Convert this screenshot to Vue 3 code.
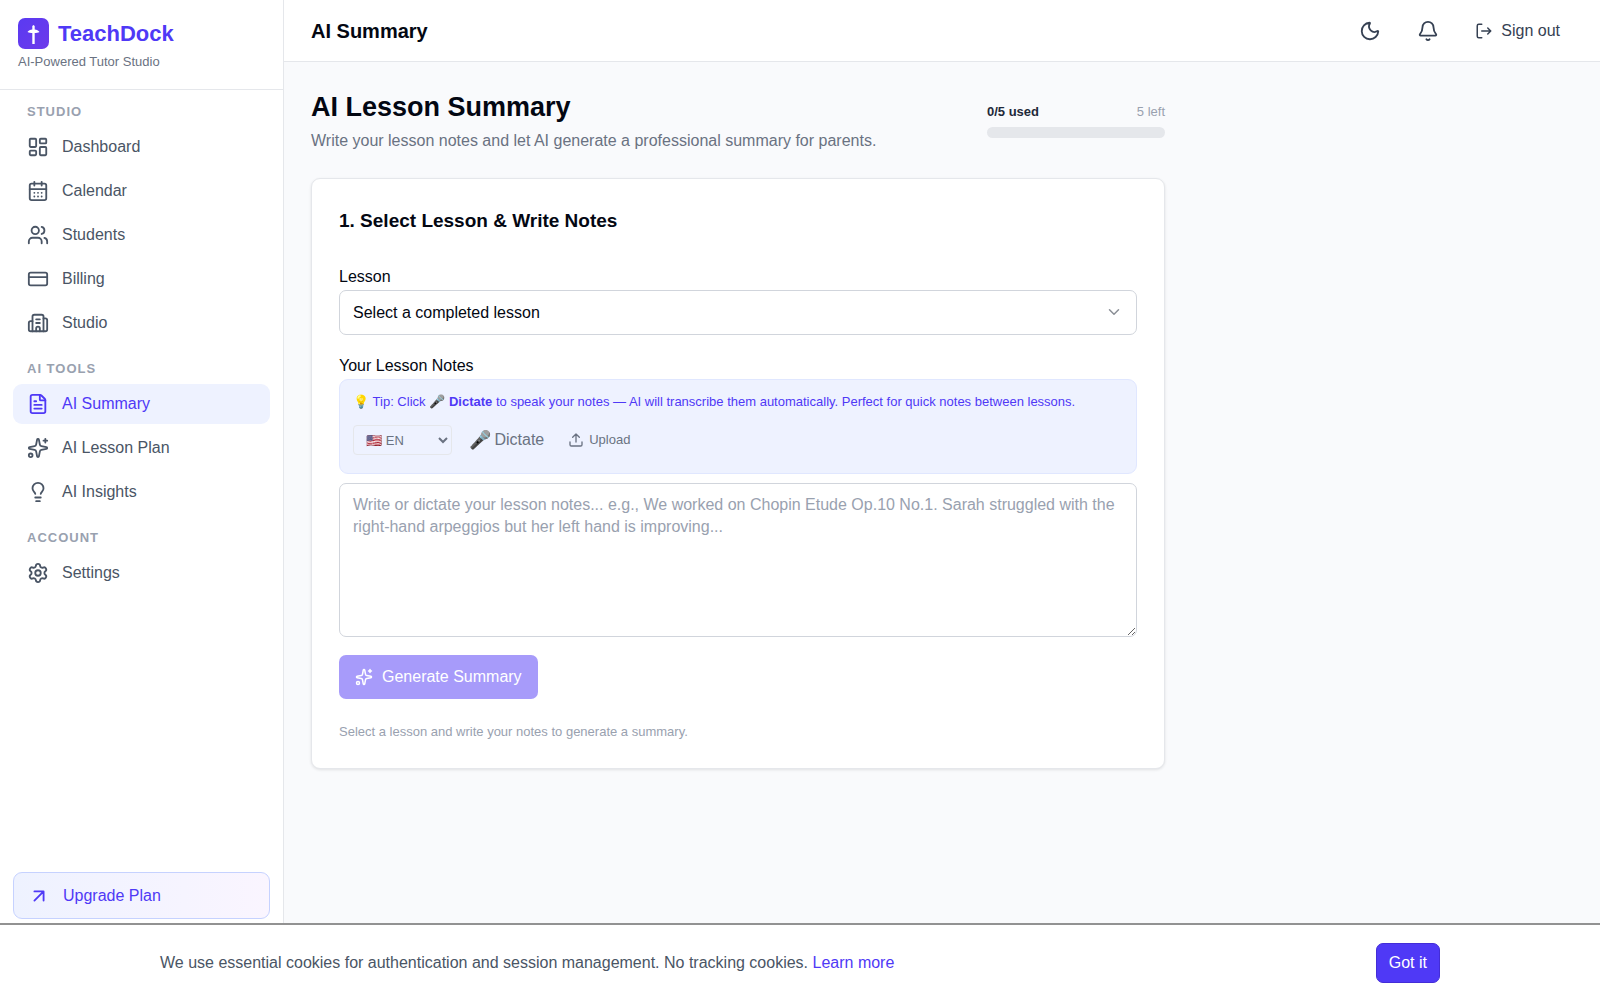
<script setup>
import { ref, h } from 'vue'

const icons = {
  dashboard:
    '<rect x="3" y="3" width="7" height="9" rx="1"/><rect x="14" y="3" width="7" height="5" rx="1"/><rect x="14" y="12" width="7" height="9" rx="1"/><rect x="3" y="16" width="7" height="5" rx="1"/>',
  calendar:
    '<path d="M8 2v4M16 2v4M3 10h18"/><rect x="3" y="4" width="18" height="18" rx="2"/><path d="M8 14h.01M12 14h.01M16 14h.01M8 18h.01M12 18h.01M16 18h.01"/>',
  users:
    '<path d="M16 21v-2a4 4 0 0 0-4-4H6a4 4 0 0 0-4 4v2"/><path d="M16 3.128a4 4 0 0 1 0 7.744"/><path d="M22 21v-2a4 4 0 0 0-3-3.87"/><circle cx="9" cy="7" r="4"/>',
  card: '<rect x="2" y="5" width="20" height="14" rx="2"/><path d="M2 10h20"/>',
  building:
    '<path d="M10 12h4M10 8h4M14 21v-3a2 2 0 0 0-4 0v3"/><path d="M6 10H4a2 2 0 0 0-2 2v7a2 2 0 0 0 2 2h16a2 2 0 0 0 2-2V9a2 2 0 0 0-2-2h-2"/><path d="M6 21V5a2 2 0 0 1 2-2h8a2 2 0 0 1 2 2v16"/>',
  file:
    '<path d="M6 22a2 2 0 0 1-2-2V4a2 2 0 0 1 2-2h8a2.4 2.4 0 0 1 1.704.706l3.588 3.588A2.4 2.4 0 0 1 20 8v12a2 2 0 0 1-2 2z"/><path d="M14 2v5a1 1 0 0 0 1 1h5M10 9H8M16 13H8M16 17H8"/>',
  sparkles:
    '<path d="M11.017 2.814a1 1 0 0 1 1.966 0l1.051 5.558a2 2 0 0 0 1.594 1.594l5.558 1.051a1 1 0 0 1 0 1.966l-5.558 1.051a2 2 0 0 0-1.594 1.594l-1.051 5.558a1 1 0 0 1-1.966 0l-1.051-5.558a2 2 0 0 0-1.594-1.594l-5.558-1.051a1 1 0 0 1 0-1.966l5.558-1.051a2 2 0 0 0 1.594-1.594z"/><path d="M20 2v4M22 4h-4"/><circle cx="4" cy="20" r="2"/>',
  bulb:
    '<path d="M15 14c.2-1 .7-1.7 1.5-2.5 1-.9 1.5-2.2 1.5-3.5A6 6 0 0 0 6 8c0 1 .2 2.2 1.5 3.5.7.7 1.3 1.5 1.5 2.5"/><path d="M9 18h6M10 22h4"/>',
  settings:
    '<path d="M9.671 4.136a2.34 2.34 0 0 1 4.659 0 2.34 2.34 0 0 0 3.319 1.915 2.34 2.34 0 0 1 2.33 4.033 2.34 2.34 0 0 0 0 3.831 2.34 2.34 0 0 1-2.33 4.033 2.34 2.34 0 0 0-3.319 1.915 2.34 2.34 0 0 1-4.659 0 2.34 2.34 0 0 0-3.32-1.915 2.34 2.34 0 0 1-2.33-4.033 2.34 2.34 0 0 0 0-3.831A2.34 2.34 0 0 1 6.35 6.051a2.34 2.34 0 0 0 3.319-1.915"/><circle cx="12" cy="12" r="3"/>',
  arrow: '<path d="M7 7h10v10M7 17 17 7"/>',
  moon:
    '<path d="M20.985 12.486a9 9 0 1 1-9.473-9.472c.405-.022.617.46.402.803a6 6 0 0 0 8.268 8.268c.344-.215.825-.004.803.401"/>',
  bell:
    '<path d="M10.268 21a2 2 0 0 0 3.464 0"/><path d="M3.262 15.326A1 1 0 0 0 4 17h16a1 1 0 0 0 .74-1.673C19.41 13.956 18 12.499 18 8A6 6 0 0 0 6 8c0 4.499-1.411 5.956-2.738 7.326"/>',
  logout:
    '<path d="m17 8 4 4-4 4M21 12H9"/><path d="M9 21H5a2 2 0 0 1-2-2V5a2 2 0 0 1 2-2h4"/>',
  upload:
    '<path d="M12 3v12M17 8l-5-5-5 5"/><path d="M21 15v4a2 2 0 0 1-2 2H5a2 2 0 0 1-2-2v-4"/>',
  chevron: '<path d="m6 9 6 6 6-6"/>',
}

const Icon = (props) =>
  h('svg', {
    width: props.size,
    height: props.size,
    viewBox: '0 0 24 24',
    fill: 'none',
    stroke: 'currentColor',
    'stroke-width': 2,
    'stroke-linecap': 'round',
    'stroke-linejoin': 'round',
    'aria-hidden': 'true',
    innerHTML: icons[props.name],
  })
Icon.props = { name: String, size: { type: Number, default: 22 } }

const groups = [
  {
    title: 'STUDIO',
    items: [
      { label: 'Dashboard', icon: 'dashboard' },
      { label: 'Calendar', icon: 'calendar' },
      { label: 'Students', icon: 'users' },
      { label: 'Billing', icon: 'card' },
      { label: 'Studio', icon: 'building' },
    ],
  },
  {
    title: 'AI TOOLS',
    items: [
      { label: 'AI Summary', icon: 'file', active: true },
      { label: 'AI Lesson Plan', icon: 'sparkles' },
      { label: 'AI Insights', icon: 'bulb' },
    ],
  },
  { title: 'ACCOUNT', items: [{ label: 'Settings', icon: 'settings' }] },
]

const lesson = ref('')
const language = ref('en')
const notes = ref('')
</script>

<template>
  <div class="app">
    <div class="shell">
      <aside class="sidebar">
        <div class="brand">
          <div class="brand-row">
            <svg class="logo" viewBox="0 0 31 31" aria-hidden="true">
              <defs>
                <linearGradient id="logo-fill" x1="0" y1="0" x2="1" y2="1">
                  <stop offset="0" stop-color="#5a3af2" />
                  <stop offset="1" stop-color="#6d3aea" />
                </linearGradient>
              </defs>
              <rect width="31" height="31" rx="7" fill="url(#logo-fill)" />
              <path
                d="M15.500 7l1.200 1v3.400c2 .3 3.700 1.100 4.800 2.600-1.600.8-3.200 1-4.800 1v11h-2.400V15c-1.600 0-3.200-.2-4.800-1 1.100-1.500 2.800-2.300 4.800-2.600V8z"
                fill="#fff"
              />
            </svg>
            <span class="brand-name">TeachDock</span>
          </div>
          <p class="tagline">AI-Powered Tutor Studio</p>
        </div>

        <nav class="nav" aria-label="Main">
          <section v-for="group in groups" :key="group.title" class="nav-group">
            <h2 class="nav-title">{{ group.title }}</h2>
            <ul class="nav-list">
              <li v-for="item in group.items" :key="item.label">
                <a href="#" class="nav-link" :class="{ active: item.active }">
                  <Icon :name="item.icon" />
                  <span>{{ item.label }}</span>
                </a>
              </li>
            </ul>
          </section>
        </nav>

        <div class="upgrade-wrap">
          <a href="#" class="upgrade"><Icon name="arrow" /><span>Upgrade Plan</span></a>
        </div>
      </aside>

      <div class="content">
        <header class="topbar">
          <span class="topbar-title">AI Summary</span>
          <div class="topbar-actions">
            <button type="button" class="icon-btn" aria-label="Toggle theme"><Icon name="moon" /></button>
            <button type="button" class="icon-btn" aria-label="Notifications"><Icon name="bell" /></button>
            <button type="button" class="signout"><Icon name="logout" :size="18" />Sign out</button>
          </div>
        </header>

        <main class="main">
          <div class="page-head">
            <div>
              <h1>AI Lesson Summary</h1>
              <p class="subtitle">Write your lesson notes and let AI generate a professional summary for parents.</p>
            </div>
            <div class="usage">
              <div class="usage-row"><strong>0/5 used</strong><span>5 left</span></div>
              <div class="usage-bar"></div>
            </div>
          </div>

          <section class="card">
            <h2 class="card-title">1. Select Lesson &amp; Write Notes</h2>

            <label class="label" for="lesson">Lesson</label>
            <div class="select-wrap">
              <select id="lesson" v-model="lesson" class="field select">
                <option value="">Select a completed lesson</option>
              </select>
              <Icon name="chevron" :size="18" class="select-chevron" />
            </div>

            <label class="label" for="notes">Your Lesson Notes</label>
            <div class="tip">
              <p class="tip-text">
                💡 Tip: Click 🎤 <strong>Dictate</strong> to speak your notes — AI will transcribe them
                automatically. Perfect for quick notes between lessons.
              </p>
              <div class="tools">
                <select v-model="language" class="lang" aria-label="Dictation language">
                  <option value="en">🇺🇸 EN</option>
                </select>
                <button type="button" class="dictate"><span class="mic">🎤</span>Dictate</button>
                <button type="button" class="upload"><Icon name="upload" :size="16" />Upload</button>
              </div>
            </div>
            <textarea
              id="notes"
              v-model="notes"
              class="field notes"
              placeholder="Write or dictate your lesson notes... e.g., We worked on Chopin Etude Op.10 No.1. Sarah struggled with the right-hand arpeggios but her left hand is improving..."
            ></textarea>

            <button type="button" class="generate" disabled>
              <Icon name="sparkles" :size="18" />Generate Summary
            </button>
            <p class="hint">Select a lesson and write your notes to generate a summary.</p>
          </section>
        </main>
      </div>
    </div>

    <div class="cookies" role="region" aria-label="Cookie notice">
      <div class="cookies-inner">
        <p>
          We use essential cookies for authentication and session management. No tracking cookies.
          <a href="#">Learn more</a>
        </p>
        <button type="button" class="gotit">Got it</button>
      </div>
    </div>
  </div>
</template>

<style>
body {
  margin: 0;
  background: #f9fafc;
}
</style>

<style scoped>
.app,
.app * {
  box-sizing: border-box;
}
.app {
  display: flex;
  flex-direction: column;
  min-height: 100vh;
  font-family: "Liberation Sans", Arial, "Noto Color Emoji", sans-serif;
  font-size: 16px;
  line-height: 22px;
  color: #030712;
}
h1,
h2,
p,
ul {
  margin: 0;
  padding: 0;
}
ul {
  list-style: none;
}
a {
  text-decoration: none;
}
button,
select,
textarea {
  margin: 0;
  font: inherit;
}
button {
  border: 0;
  background: none;
  padding: 0;
}
svg {
  flex: none;
}

.shell {
  flex: 1;
  display: flex;
}
.sidebar {
  flex: 0 0 284px;
  display: flex;
  flex-direction: column;
  background: #fff;
  border-right: 1px solid #e5e7eb;
}
.brand {
  height: 90px;
  padding: 18px 18px 0;
  border-bottom: 1px solid #e5e7eb;
}
.brand-row {
  display: flex;
  align-items: center;
  gap: 9px;
}
.logo {
  width: 31px;
  height: 31px;
}
.brand-name {
  font-size: 22px;
  font-weight: 700;
  color: #4f39f6;
}
.tagline {
  margin-top: 4px;
  font-size: 13px;
  line-height: 18px;
  color: #6a7282;
}
.nav {
  flex: 1;
  display: flex;
  flex-direction: column;
  gap: 17px;
  padding: 13px 13px 0;
}
.nav-title {
  padding: 0 14px 6px;
  font-size: 13px;
  line-height: 18px;
  letter-spacing: 1px;
  color: #99a1af;
}
.nav-list {
  display: flex;
  flex-direction: column;
  gap: 4px;
}
.nav-link {
  display: flex;
  align-items: center;
  gap: 13px;
  height: 40px;
  padding: 0 14px;
  border-radius: 9px;
  color: #4a5565;
}
.nav-link.active {
  background: #eef2ff;
  color: #4f39f6;
}
.upgrade-wrap {
  padding: 13px 13px 4px;
}
.upgrade {
  display: flex;
  align-items: center;
  gap: 13px;
  height: 47px;
  padding: 0 14px;
  border: 1px solid #c6d2ff;
  border-radius: 9px;
  background: linear-gradient(90deg, #eef2ff, #faf5ff);
  color: #4f39f6;
}

.content {
  flex: 1;
  min-width: 0;
}
.topbar {
  display: flex;
  align-items: center;
  justify-content: space-between;
  height: 62px;
  padding: 0 40px 0 27px;
  background: #fff;
  border-bottom: 1px solid #e5e7eb;
}
.topbar-title {
  font-size: 20px;
  font-weight: 700;
}
.topbar-actions {
  display: flex;
  align-items: center;
  gap: 36px;
  color: #364153;
}
.icon-btn,
.signout {
  display: flex;
  align-items: center;
  gap: 8px;
  color: inherit;
}

.main {
  max-width: 908px;
  padding: 27px;
}
.page-head {
  display: flex;
  align-items: center;
  justify-content: space-between;
  margin-bottom: 26px;
}
h1 {
  font-size: 27px;
  line-height: 36px;
}
.subtitle {
  margin-top: 5px;
  color: #6a7282;
}
.usage {
  width: 178px;
}
.usage-row {
  display: flex;
  justify-content: space-between;
  margin-bottom: 6px;
  font-size: 13px;
  line-height: 18px;
  color: #99a1af;
}
.usage-row strong {
  color: #1e2939;
}
.usage-bar {
  height: 11px;
  border-radius: 6px;
  background: #e5e7eb;
}

.card {
  padding: 27px;
  background: #fff;
  border: 1px solid #e5e7eb;
  border-radius: 9px;
  box-shadow: 0 1px 3px rgba(0, 0, 0, 0.1);
}
.card-title {
  margin: 4px 0 34px;
  font-size: 19px;
}
.label {
  display: block;
  margin-bottom: 2px;
}
.field {
  display: block;
  width: 100%;
  border: 1px solid #d1d5dc;
  border-radius: 7px;
  background: #fff;
  color: #030712;
}
.select-wrap {
  position: relative;
  margin-bottom: 20px;
}
.select {
  height: 45px;
  padding: 0 40px 0 13px;
  appearance: none;
}
.select-chevron {
  position: absolute;
  right: 14px;
  top: 13px;
  color: #8b8f96;
  pointer-events: none;
}
.tip {
  height: 95px;
  margin-bottom: 9px;
  padding: 13px;
  background: #eef2ff;
  border: 1px solid #e0e7ff;
  border-radius: 9px;
}
.tip-text {
  font-size: 13px;
  line-height: 18px;
  color: #4f39f6;
}
.tools {
  display: flex;
  align-items: center;
  gap: 17px;
  margin-top: 14px;
  color: #6a7282;
}
.lang {
  width: 99px;
  height: 30px;
  padding: 0 0 0 8px;
  border: 1px solid #e5e7eb;
  border-radius: 4px;
  background: transparent;
  color: inherit;
  font-size: 13px;
}
.dictate,
.upload {
  display: flex;
  align-items: center;
  gap: 3px;
  color: inherit;
}
.mic {
  font-size: 18px;
}
.upload {
  gap: 5px;
  margin-left: 7px;
  font-size: 13px;
}
.notes {
  height: 154px;
  padding: 10px 13px;
  resize: vertical;
}
.notes::placeholder {
  color: #99a1af;
}
.generate {
  display: flex;
  align-items: center;
  gap: 9px;
  height: 44px;
  margin-top: 18px;
  padding: 0 16px;
  border-radius: 7px;
  background: #a79bfa;
  color: #fff;
}
.hint {
  margin-top: 24px;
  font-size: 13px;
  line-height: 18px;
  color: #99a1af;
}

.cookies {
  padding: 18px 27px 17px;
  background: #fff;
  border-top: 2px solid #929292;
}
.cookies-inner {
  display: flex;
  align-items: center;
  justify-content: space-between;
  max-width: 1280px;
  margin: 0 auto;
  color: #4a5565;
}
.cookies a {
  color: #4f39f6;
}
.gotit {
  height: 40px;
  padding: 0 12px;
  border: 1px solid #432dd7;
  border-radius: 7px;
  background: #4f39f6;
  color: #fff;
}
</style>
